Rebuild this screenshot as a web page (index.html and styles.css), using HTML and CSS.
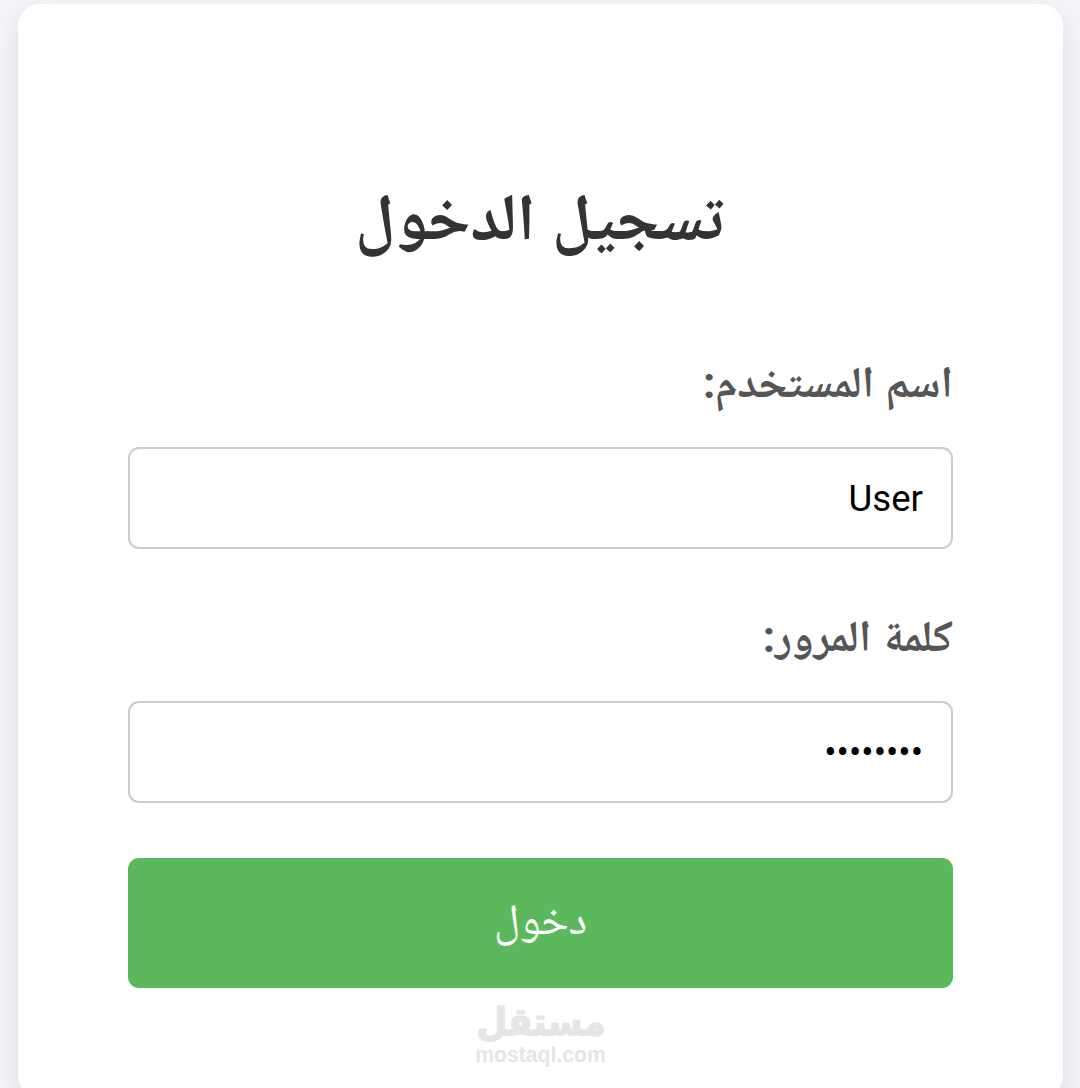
FILE: index.html
```html
<!DOCTYPE html>
<html lang="ar" dir="rtl">
<head>
    <meta charset="UTF-8">
    <meta name="viewport" content="width=device-width, initial-scale=1.0">
    <title>تسجيل الدخول</title>
    <link rel="stylesheet" href="styles.css">
</head>
<body>
    <div class="login-container">
        <h2>تسجيل الدخول</h2>
        <form id="loginForm">
            <label for="username">اسم المستخدم<span class="colon">:</span></label>
            <input type="text" id="username" name="username" value="User" required>
            <label for="password">كلمة المرور<span class="colon">:</span></label>
            <input type="password" id="password" name="password" value="12345678" required>
            <button type="submit">دخول</button>
        </form>
        <div class="brand">
            <svg class="brand-name" width="134" height="44" viewBox="0 0 134 44">
                <text x="67" y="34" direction="rtl" text-anchor="middle" textLength="129" lengthAdjust="spacingAndGlyphs">مستقل</text>
            </svg>
            <span class="brand-url" dir="ltr">mostaql.com</span>
        </div>
    </div>
</body>
</html>
```

FILE: styles.css
```css
* {
    box-sizing: border-box;
}
body {
    font-family: Roboto, 'Noto Naskh Arabic UI', 'Noto Naskh Arabic', 'DejaVu Sans', sans-serif;
    background-color: #f4f4f9;
    margin: 0;
    padding: 4px 17px 0 18px;
    height: 1088px;
    overflow: hidden;
}
.login-container {
    height: 1094px;
    background-color: #ffffff;
    border-radius: 22px;
    padding: 168px 110px 0;
    box-shadow: 0 11px 28px rgba(0, 0, 0, 0.1);
}
h2 {
    height: 110px;
    margin: 0;
    padding-right: 2px;
    line-height: 110px;
    font-size: 66px;
    font-weight: bold;
    text-align: center;
    white-space: nowrap;
    color: #333333;
}
form {
    display: flex;
    flex-direction: column;
    padding-top: 68px;
}
label {
    height: 76px;
    margin-bottom: 21px;
    line-height: 76px;
    font-size: 44px;
    font-weight: bold;
    color: #555555;
}
.colon {
    line-height: 0;
    vertical-align: 5px;
}
input {
    height: 102px;
    margin: 0 0 55px;
    padding: 0 28px;
    border: 2px solid #cccccc;
    border-radius: 11px;
    background-color: #ffffff;
    color: #000000;
    font-family: Roboto, sans-serif;
    font-size: 36.6px;
}
button {
    height: 130px;
    padding: 0 0 1px;
    border: none;
    border-radius: 11px;
    background-color: #5cb85c;
    color: #ffffff;
    font-family: inherit;
    font-size: 44px;
    cursor: pointer;
}
.brand {
    display: flex;
    flex-direction: column;
    align-items: center;
    margin-top: 13px;
    font-weight: bold;
}
.brand-name {
    display: block;
    overflow: visible;
    font-family: 'DejaVu Sans', sans-serif;
    font-size: 38px;
    fill: #e5e5e5;
    stroke: #e5e5e5;
    stroke-width: 1.5;
    stroke-linejoin: round;
}
.brand-url {
    font-family: 'Liberation Sans', sans-serif;
    font-size: 21.2px;
    line-height: 20px;
    color: #e5e5e5;
}
```
